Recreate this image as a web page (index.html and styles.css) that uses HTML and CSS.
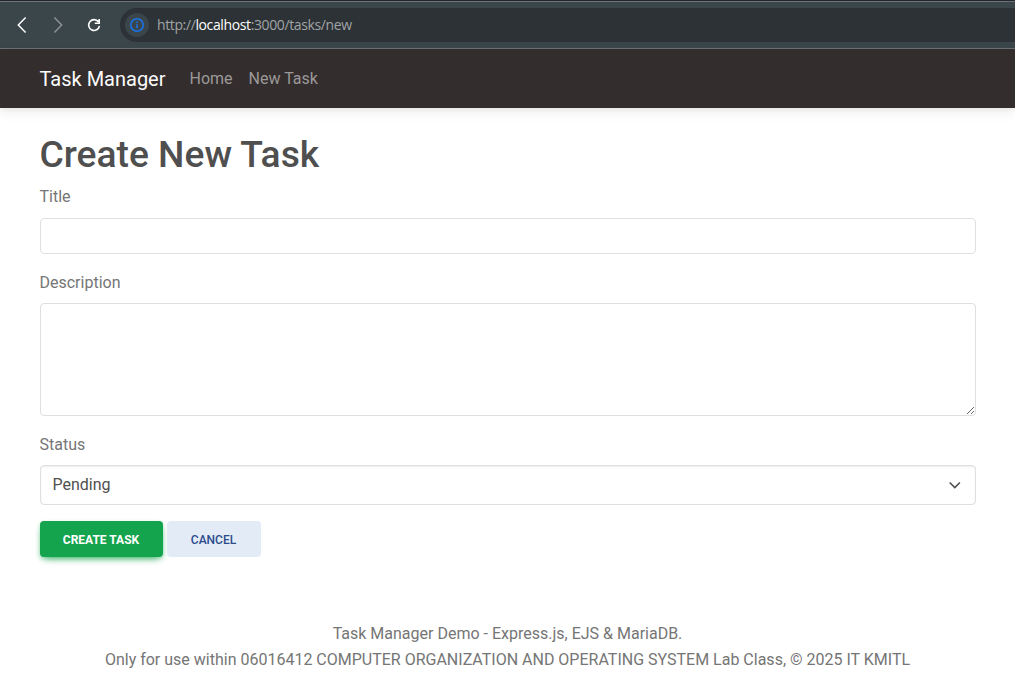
FILE: index.html
```html
<!DOCTYPE html>
<html lang="en">
<head>
<meta charset="utf-8">
<title>Create New Task</title>
<link rel="stylesheet" href="styles.css">
</head>
<body>
<div class="browser-bar">
  <svg class="nav-icon back" width="18" height="18" viewBox="0 0 18 18"><path d="M12.600 1.400 5.300 9l7.300 7.600"/></svg>
  <svg class="nav-icon forward" width="18" height="18" viewBox="0 0 18 18"><path d="m5.400 1.400 7.300 7.600-7.300 7.600"/></svg>
  <svg class="nav-icon reload" width="18" height="18" viewBox="0 0 18 18"><path d="M13.400 5.800A5.400 5.400 0 1 0 14.400 9.800M14.200 3v4.200H9.800"/></svg>
  <div class="address">
    <span class="site-info"><svg width="16" height="16" viewBox="0 0 16 16"><circle cx="8" cy="8" r="6.200"/><path d="M8 7.200v4M8 4.500v1.500"/></svg></span>
    <span class="url">http://<b>localhost</b>:3000/tasks/new</span>
  </div>
</div>
<nav class="navbar">
  <a class="brand">Task Manager</a>
  <a class="nav-link">Home</a>
  <a class="nav-link">New Task</a>
</nav>
<main class="container">
  <h1>Create New Task</h1>
  <form>
    <div class="field">
      <label for="title">Title</label>
      <input class="control" id="title" type="text">
    </div>
    <div class="field">
      <label for="description">Description</label>
      <textarea class="control area" id="description"></textarea>
    </div>
    <div class="field">
      <label for="status">Status</label>
      <div class="select" id="status">
        <span>Pending</span>
        <svg width="16" height="12" viewBox="0 0 16 12"><path d="m2.700 3.500 5.100 5.100 5.100-5.100"/></svg>
      </div>
    </div>
    <div class="actions">
      <button class="btn primary" type="button">Create Task</button>
      <button class="btn secondary" type="button">Cancel</button>
    </div>
  </form>
</main>
<footer class="footer">
  <div>Task Manager Demo - Express.js, EJS &amp; MariaDB.</div>
  <div>Only for use within 06016412 COMPUTER ORGANIZATION AND OPERATING SYSTEM Lab Class, © 2025 IT KMITL</div>
</footer>
</body>
</html>
```
FILE: styles.css
```css
* { box-sizing: border-box; }
body {
  margin: 0;
  background: #fff;
  color: #4f4f4f;
  font: 400 16px/1.6 Roboto, sans-serif;
  overflow: hidden;
}
.browser-bar {
  height: 49px;
  display: flex;
  align-items: center;
  padding-left: 13px;
  background: #3b464a;
  border-top: 1px solid #202629;
  border-bottom: 1px solid #6b7376;
  box-shadow: inset 0 1px #6b7376;
}
.nav-icon {
  margin-right: 18px;
  fill: none;
  stroke: #fff;
  stroke-width: 1.5;
}
.nav-icon.forward { stroke: #8b9294; }
.nav-icon.reload { stroke-width: 1.6; }
.address {
  flex: 1;
  height: 34px;
  margin-left: -1px;
  padding-left: 5px;
  display: flex;
  align-items: center;
  border-radius: 17px 0 0 17px;
  background: #2c3235;
}
.site-info {
  width: 24px;
  height: 24px;
  display: grid;
  place-items: center;
  border-radius: 50%;
  background: #3b464a;
}
.site-info svg {
  fill: none;
  stroke: #1a73e8;
  stroke-width: 1.6;
}
.url {
  margin-left: 8px;
  color: #a0a4a6;
  font: 14px/20px "Open Sans", "Noto Sans", sans-serif;
  letter-spacing: -0.38px;
}
.url b { color: #fff; font-weight: 400; }
.navbar {
  height: 59px;
  padding: 0 39.5px;
  display: flex;
  align-items: center;
  background: #332d2d;
  box-shadow: 0 4px 12px rgba(0, 0, 0, .07), 0 2px 4px rgba(0, 0, 0, .05);
}
.brand {
  margin-right: 24px;
  color: #fbfbfb;
  font-size: 20px;
}
.nav-link { margin-right: 16px; color: #9c9999; }
.container { padding: 24px 39.5px 0; }
h1 {
  margin: 0 0 7.5px;
  font-size: 37.2px;
  line-height: 1.2;
  font-weight: 500;
}
.field { margin-bottom: 16px; }
.field label {
  display: block;
  margin-bottom: 8px;
  color: #757575;
}
.control {
  display: block;
  width: 100%;
  height: 36px;
  padding: 5px 12px;
  border: 1px solid #dfdfdf;
  border-radius: 4px;
  font: inherit;
  outline: none;
}
.area { height: 112.4px; }
.select {
  height: 39.6px;
  padding: 0 12px;
  display: flex;
  align-items: center;
  justify-content: space-between;
  border: 1px solid #dfdfdf;
  border-radius: 4px;
  box-shadow: inset 0 1px 2px rgba(0, 0, 0, .08);
}
.select svg {
  fill: none;
  stroke: #4f4f4f;
  stroke-width: 1.6;
}
.actions { display: flex; gap: 4px; }
.btn {
  height: 36px;
  padding: 2px 0 0;
  border: 0;
  border-radius: 4px;
  font: 500 12px/18px Roboto, sans-serif;
  text-transform: uppercase;
}
.primary {
  width: 123px;
  color: #fff;
  background: #14a44d;
  font-weight: 700;
  box-shadow: 0 4px 9px -4px #14a44d, 0 2px 4px rgba(20, 164, 77, .3);
}
.secondary {
  width: 94px;
  color: #2c4c8c;
  background: #e3ebf7;
}
.footer {
  margin-top: 64px;
  text-align: center;
  color: #757575;
}
```
